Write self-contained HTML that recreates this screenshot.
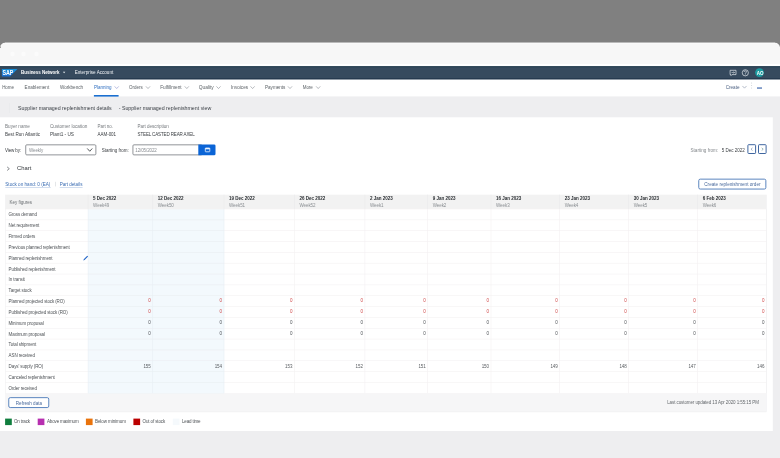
<!DOCTYPE html>
<html><head><meta charset="utf-8"><title>Supplier managed replenishment view</title>
<style>
html,body{margin:0;padding:0;overflow:hidden}
html{width:780px;height:458px}
#k{position:absolute;left:0;top:0;width:780px;height:458px;overflow:hidden}
body{width:780px;height:458px;background:#808080;overflow:hidden;position:relative;font-family:"Liberation Sans",sans-serif}
#w{position:absolute;left:-20px;top:-20px;width:820px;height:498px;background:#808080;filter:blur(0.45px)}
#c{position:absolute;left:20px;top:20px;width:780px;height:458px}
#s{position:absolute;left:-20px;top:-20px;display:block}
.t{position:absolute;white-space:nowrap;line-height:8px;height:8px;font-family:"Liberation Sans",sans-serif}
</style></head><body><div id="k"><div id="w"><div id="c">
<svg id="s" width="820" height="498" viewBox="-20 -20 820 498">
<rect x="-20.00" y="-20.00" width="820.00" height="62.70" fill="#808080"/>
<path d="M-20 120 V47.6 H0 A5 5 0 0 1 5 42.7 H775 A5 5 0 0 1 780 47.6 H800 V120 Z" fill="#f7f7f7" />
<path d="M5 43.1 H775" fill="none" stroke="#ffffff" stroke-width="0.7" />
<rect x="-20.00" y="42.60" width="20.00" height="5.20" fill="#808080"/>
<rect x="780.00" y="42.60" width="20.00" height="5.20" fill="#808080"/>
<rect x="0.00" y="46.70" width="0.70" height="0.90" fill="#303030"/>
<rect x="-20.00" y="96.30" width="820.00" height="400.00" fill="#eeeef0"/>
<rect x="-20.00" y="63.90" width="820.00" height="2.40" fill="#ffffff"/>
<rect x="-20.00" y="66.20" width="820.00" height="13.40" fill="#364a5e"/>
<rect x="-20.00" y="66.20" width="820.00" height="1.20" fill="#2a4254"/>
<rect x="-20.00" y="78.20" width="820.00" height="1.40" fill="#23374d"/>
<circle cx="12.5" cy="54" r="2.3" fill="#fbfbfb"/>
<circle cx="23.5" cy="54" r="2.3" fill="#fbfbfb"/>
<circle cx="36.5" cy="54" r="2.3" fill="#fbfbfb"/>
<rect x="-20.00" y="79.60" width="820.00" height="16.70" fill="#ffffff"/>
<rect x="-20.00" y="117.30" width="792.80" height="313.70" fill="#ffffff"/>
<defs><linearGradient id="g" x1="0" y1="0" x2="0" y2="1"><stop offset="0" stop-color="#1590d8"/><stop offset="1" stop-color="#1c6fd2"/></linearGradient></defs>
<g transform="translate(1.9 68.9) scale(0.1)"><path d="M0 0 H156 L82 75 H0 Z" fill="url(#g)"/><text x="5" y="62" font-family="Liberation Sans" font-weight="bold" font-size="66" fill="#fff" textLength="110" lengthAdjust="spacingAndGlyphs">SAP</text></g>
<path d="M62.9 71.7 h2.4 l-1.2 1.5 Z" fill="#e8edf2" />
<path d="M730.1 70.3 h5.9 v4.3 h-4.0 l-1.0 1.0 v-1.0 h-0.9 Z" fill="none" stroke="#e3e8ed" stroke-width="0.7" stroke-linejoin="round"/>
<path d="M731.5 72.5 h3 M733.5 71.5 l1 1 l-1 1" fill="none" stroke="#e3e8ed" stroke-width="0.55" />
<circle cx="745.3" cy="72.8" r="3.1" fill="none" stroke="#e3e8ed" stroke-width="0.7"/>
<path d="M744.1 72.0 q0 -1.2 1.2 -1.2 q1.2 0 1.2 1.1 q0 0.7 -1.2 1.2 v0.6" fill="none" stroke="#e3e8ed" stroke-width="0.65" />
<circle cx="745.3" cy="74.8" r="0.42" fill="#e3e8ed"/>
<circle cx="759.5" cy="72.6" r="4.4" fill="#1b9aa0"/>
<path d="M114.90 86.65 l1.80 1.90 l1.80 -1.90" fill="none" stroke="#7f86c8" stroke-width="0.55" stroke-linecap="round" stroke-linejoin="round"/>
<path d="M146.20 86.65 l1.80 1.90 l1.80 -1.90" fill="none" stroke="#7b8188" stroke-width="0.55" stroke-linecap="round" stroke-linejoin="round"/>
<path d="M185.00 86.65 l1.80 1.90 l1.80 -1.90" fill="none" stroke="#7b8188" stroke-width="0.55" stroke-linecap="round" stroke-linejoin="round"/>
<path d="M216.70 86.65 l1.80 1.90 l1.80 -1.90" fill="none" stroke="#7b8188" stroke-width="0.55" stroke-linecap="round" stroke-linejoin="round"/>
<path d="M250.80 86.65 l1.80 1.90 l1.80 -1.90" fill="none" stroke="#7b8188" stroke-width="0.55" stroke-linecap="round" stroke-linejoin="round"/>
<path d="M288.20 86.65 l1.80 1.90 l1.80 -1.90" fill="none" stroke="#7b8188" stroke-width="0.55" stroke-linecap="round" stroke-linejoin="round"/>
<path d="M316.40 86.65 l1.80 1.90 l1.80 -1.90" fill="none" stroke="#7b8188" stroke-width="0.55" stroke-linecap="round" stroke-linejoin="round"/>
<rect x="93.90" y="95.00" width="24.70" height="1.60" fill="#1a6fd0"/>
<path d="M742.70 86.25 l1.80 1.90 l1.80 -1.90" fill="none" stroke="#7b88a0" stroke-width="0.55" stroke-linecap="round" stroke-linejoin="round"/>
<circle cx="751.7" cy="83.0" r="0.45" fill="#a9b1bb"/>
<circle cx="751.7" cy="85.5" r="0.45" fill="#a9b1bb"/>
<circle cx="751.7" cy="88.0" r="0.45" fill="#a9b1bb"/>
<rect x="757.00" y="87.40" width="5.00" height="1.30" fill="#4f74b3"/>
<rect x="9.00" y="103.00" width="0.50" height="10.00" fill="#e7e8eb"/>
<rect x="25.73" y="144.83" width="70.15" height="10.05" fill="#fff" rx="1.0" stroke="#7e8287" stroke-width="0.85"/>
<path d="M87.50 148.75 l2.25 2.50 l2.25 -2.50" fill="none" stroke="#3a3e42" stroke-width="0.85" stroke-linecap="round" stroke-linejoin="round"/>
<rect x="132.93" y="144.83" width="69.15" height="10.05" fill="#fff" rx="1.0" stroke="#7e8287" stroke-width="0.85"/>
<path d="M198.3 144.4 H214.1 a1.4 1.4 0 0 1 1.4 1.4 V153.9 a1.4 1.4 0 0 1 -1.4 1.4 H198.3 Z" fill="#0a64d6" />
<rect x="205.30" y="148.00" width="4.50" height="3.80" fill="none" rx="0.5" stroke="#eaf3ff" stroke-width="0.8"/>
<rect x="205.30" y="148.00" width="4.50" height="1.30" fill="#eaf3ff"/>
<rect x="747.90" y="144.70" width="7.70" height="8.80" fill="#fff" rx="0.7" stroke="#3f66a0" stroke-width="1.0"/>
<rect x="758.50" y="144.70" width="7.60" height="8.80" fill="#fff" rx="0.7" stroke="#3f66a0" stroke-width="1.0"/>
<path d="M752.5 147.9 l-1.5 1.3 l1.5 1.3" fill="none" stroke="#7d93b3" stroke-width="0.7" />
<path d="M761.7 147.9 l1.5 1.3 l-1.5 1.3" fill="none" stroke="#6f9a9a" stroke-width="0.7" />
<path d="M7.1 166.9 l2.2 1.8 l-2.2 1.8" fill="none" stroke="#4a4f55" stroke-width="0.65" />
<rect x="5.30" y="187.30" width="45.40" height="0.50" fill="#a2badf"/>
<rect x="55.40" y="181.80" width="0.50" height="4.60" fill="#c9ccd0"/>
<rect x="59.70" y="187.30" width="22.90" height="0.50" fill="#a2badf"/>
<rect x="698.75" y="179.15" width="67.10" height="9.90" fill="#fff" rx="1.5" stroke="#4a78b8" stroke-width="0.9"/>
<rect x="5.40" y="194.70" width="761.00" height="14.30" fill="#f2f2f2"/>
<rect x="88.10" y="209.00" width="135.90" height="184.28" fill="#f3f9fd"/>
<rect x="5.40" y="208.70" width="761.00" height="0.60" fill="#f3f1f2"/>
<rect x="5.40" y="219.54" width="761.00" height="0.60" fill="#f3f1f2"/>
<rect x="5.40" y="230.38" width="761.00" height="0.60" fill="#f3f1f2"/>
<rect x="5.40" y="241.22" width="761.00" height="0.60" fill="#f3f1f2"/>
<rect x="5.40" y="252.06" width="761.00" height="0.60" fill="#f3f1f2"/>
<rect x="5.40" y="262.90" width="761.00" height="0.60" fill="#f3f1f2"/>
<rect x="5.40" y="273.74" width="761.00" height="0.60" fill="#f3f1f2"/>
<rect x="5.40" y="284.58" width="761.00" height="0.60" fill="#f3f1f2"/>
<rect x="5.40" y="295.42" width="761.00" height="0.60" fill="#f3f1f2"/>
<rect x="5.40" y="306.26" width="761.00" height="0.60" fill="#f3f1f2"/>
<rect x="5.40" y="317.10" width="761.00" height="0.60" fill="#f3f1f2"/>
<rect x="5.40" y="327.94" width="761.00" height="0.60" fill="#f3f1f2"/>
<rect x="5.40" y="338.78" width="761.00" height="0.60" fill="#f3f1f2"/>
<rect x="5.40" y="349.62" width="761.00" height="0.60" fill="#f3f1f2"/>
<rect x="5.40" y="360.46" width="761.00" height="0.60" fill="#f3f1f2"/>
<rect x="5.40" y="371.30" width="761.00" height="0.60" fill="#f3f1f2"/>
<rect x="5.40" y="382.14" width="761.00" height="0.60" fill="#f3f1f2"/>
<rect x="5.40" y="392.98" width="761.00" height="0.60" fill="#f3f1f2"/>
<rect x="88.10" y="219.54" width="135.90" height="0.60" fill="#eaf1f7"/>
<rect x="88.10" y="230.38" width="135.90" height="0.60" fill="#eaf1f7"/>
<rect x="88.10" y="241.22" width="135.90" height="0.60" fill="#eaf1f7"/>
<rect x="88.10" y="252.06" width="135.90" height="0.60" fill="#eaf1f7"/>
<rect x="88.10" y="262.90" width="135.90" height="0.60" fill="#eaf1f7"/>
<rect x="88.10" y="273.74" width="135.90" height="0.60" fill="#eaf1f7"/>
<rect x="88.10" y="284.58" width="135.90" height="0.60" fill="#eaf1f7"/>
<rect x="88.10" y="295.42" width="135.90" height="0.60" fill="#eaf1f7"/>
<rect x="88.10" y="306.26" width="135.90" height="0.60" fill="#eaf1f7"/>
<rect x="88.10" y="317.10" width="135.90" height="0.60" fill="#eaf1f7"/>
<rect x="88.10" y="327.94" width="135.90" height="0.60" fill="#eaf1f7"/>
<rect x="88.10" y="338.78" width="135.90" height="0.60" fill="#eaf1f7"/>
<rect x="88.10" y="349.62" width="135.90" height="0.60" fill="#eaf1f7"/>
<rect x="88.10" y="360.46" width="135.90" height="0.60" fill="#eaf1f7"/>
<rect x="88.10" y="371.30" width="135.90" height="0.60" fill="#eaf1f7"/>
<rect x="88.10" y="382.14" width="135.90" height="0.60" fill="#eaf1f7"/>
<rect x="88.10" y="392.98" width="135.90" height="0.60" fill="#eaf1f7"/>
<rect x="87.80" y="209.00" width="0.60" height="184.28" fill="#e8eff5"/>
<rect x="152.45" y="209.00" width="0.60" height="184.28" fill="#e8eff5"/>
<rect x="223.70" y="209.00" width="0.60" height="184.28" fill="#e8eff5"/>
<rect x="294.10" y="209.00" width="0.60" height="184.28" fill="#f3f1f2"/>
<rect x="364.60" y="209.00" width="0.60" height="184.28" fill="#f3f1f2"/>
<rect x="427.40" y="209.00" width="0.60" height="184.28" fill="#f3f1f2"/>
<rect x="490.70" y="209.00" width="0.60" height="184.28" fill="#f3f1f2"/>
<rect x="559.40" y="209.00" width="0.60" height="184.28" fill="#f3f1f2"/>
<rect x="628.40" y="209.00" width="0.60" height="184.28" fill="#f3f1f2"/>
<rect x="697.40" y="209.00" width="0.60" height="184.28" fill="#f3f1f2"/>
<rect x="766.10" y="209.00" width="0.60" height="184.28" fill="#f3f1f2"/>
<rect x="87.80" y="194.70" width="0.60" height="14.30" fill="#eaeaeb"/>
<rect x="152.45" y="194.70" width="0.60" height="14.30" fill="#eaeaeb"/>
<rect x="223.70" y="194.70" width="0.60" height="14.30" fill="#eaeaeb"/>
<rect x="294.10" y="194.70" width="0.60" height="14.30" fill="#eaeaeb"/>
<rect x="364.60" y="194.70" width="0.60" height="14.30" fill="#eaeaeb"/>
<rect x="427.40" y="194.70" width="0.60" height="14.30" fill="#eaeaeb"/>
<rect x="490.70" y="194.70" width="0.60" height="14.30" fill="#eaeaeb"/>
<rect x="559.40" y="194.70" width="0.60" height="14.30" fill="#eaeaeb"/>
<rect x="628.40" y="194.70" width="0.60" height="14.30" fill="#eaeaeb"/>
<rect x="697.40" y="194.70" width="0.60" height="14.30" fill="#eaeaeb"/>
<rect x="5.10" y="194.70" width="0.60" height="216.98" fill="#f0f0f1"/>
<rect x="766.10" y="194.70" width="0.60" height="216.98" fill="#f0f0f1"/>
<path d="M83.3 260.38 l0.45 -1.25 l3.5 -3.5 l0.8 0.8 l-3.5 3.5 Z" fill="#1f63c7" />
<rect x="5.40" y="393.58" width="761.00" height="18.10" fill="#f6f6f7"/>
<rect x="5.40" y="411.58" width="761.00" height="0.60" fill="#ededef"/>
<rect x="8.75" y="397.65" width="40.00" height="9.90" fill="#fff" rx="1.5" stroke="#4a78b8" stroke-width="0.9"/>
<rect x="5.10" y="418.60" width="6.70" height="6.50" fill="#107e3e"/>
<rect x="37.70" y="418.60" width="6.70" height="6.50" fill="#b72fb0"/>
<rect x="85.90" y="418.60" width="6.70" height="6.50" fill="#e9730c"/>
<rect x="133.40" y="418.60" width="6.70" height="6.50" fill="#bb0000"/>
<rect x="172.80" y="418.60" width="6.70" height="6.50" fill="#f5f9fc"/>
</svg>
<span class="t" style="left:21.10px;top:68.75px;font-size:4.50px;letter-spacing:-0.045px;color:#fff;font-weight:bold">Business Network</span>
<span class="t" style="left:74.70px;top:68.75px;font-size:4.60px;color:#f0f3f6;">Enterprise Account</span>
<span class="t" style="left:756.75px;top:69.75px;font-size:4.50px;letter-spacing:-0.400px;color:#fff;font-weight:bold;letter-spacing:-0.1px">AO</span>
<span class="t" style="left:2.20px;top:83.75px;font-size:4.50px;letter-spacing:-0.095px;color:#5b6166;">Home</span>
<span class="t" style="left:24.60px;top:83.75px;font-size:4.61px;color:#5b6166;">Enablement</span>
<span class="t" style="left:59.90px;top:83.75px;font-size:4.62px;color:#5b6166;">Workbench</span>
<span class="t" style="left:94.10px;top:83.75px;font-size:4.50px;color:#2f6fc0;">Planning</span>
<span class="t" style="left:129.00px;top:83.75px;font-size:4.50px;letter-spacing:-0.010px;color:#5b6166;">Orders</span>
<span class="t" style="left:160.20px;top:83.75px;font-size:4.72px;color:#5b6166;">Fulfillment</span>
<span class="t" style="left:198.70px;top:83.75px;font-size:4.85px;color:#5b6166;">Quality</span>
<span class="t" style="left:231.10px;top:83.75px;font-size:4.61px;color:#5b6166;">Invoices</span>
<span class="t" style="left:265.00px;top:83.75px;font-size:4.59px;color:#5b6166;">Payments</span>
<span class="t" style="left:302.70px;top:83.75px;font-size:4.50px;letter-spacing:-0.055px;color:#5b6166;">More</span>
<span class="t" style="left:725.80px;top:83.75px;font-size:4.56px;color:#4a5f80;">Create</span>
<span class="t" style="left:18.00px;top:103.75px;font-size:5.25px;color:#3d4248;">Supplier managed replenishment details</span>
<span class="t" style="left:118.70px;top:103.75px;font-size:5.27px;color:#3d4248;">- Supplier managed replenishment view</span>
<span class="t" style="left:5.00px;top:122.75px;font-size:4.64px;color:#767a7e;">Buyer name</span>
<span class="t" style="left:50.00px;top:122.75px;font-size:4.65px;color:#767a7e;">Customer location</span>
<span class="t" style="left:97.50px;top:122.75px;font-size:4.50px;letter-spacing:-0.035px;color:#767a7e;">Part no.</span>
<span class="t" style="left:137.50px;top:122.75px;font-size:4.53px;color:#767a7e;">Part description</span>
<span class="t" style="left:5.00px;top:130.75px;font-size:4.60px;color:#3a3e42;">Best Run Atlantic</span>
<span class="t" style="left:50.00px;top:130.75px;font-size:4.69px;color:#3a3e42;">Plant1 - US</span>
<span class="t" style="left:97.50px;top:130.75px;font-size:4.50px;letter-spacing:-0.030px;color:#3a3e42;">AAM-001</span>
<span class="t" style="left:137.50px;top:130.75px;font-size:4.50px;letter-spacing:-0.125px;color:#3a3e42;">STEEL CASTED REAR AXEL</span>
<span class="t" style="left:5.00px;top:146.75px;font-size:4.50px;letter-spacing:-0.125px;color:#3a3e42;">View by:</span>
<span class="t" style="left:29.00px;top:146.75px;font-size:4.50px;letter-spacing:-0.105px;color:#8a8e93;">Weekly</span>
<span class="t" style="left:101.70px;top:146.75px;font-size:4.50px;color:#3a3e42;">Starting from:</span>
<span class="t" style="left:135.30px;top:146.75px;font-size:4.50px;letter-spacing:-0.110px;color:#8a8e93;">12/05/2022</span>
<span class="t" style="left:690.50px;top:146.75px;font-size:4.63px;color:#85898d;">Starting from:</span>
<span class="t" style="left:721.70px;top:146.75px;font-size:4.50px;color:#3a3e42;">5 Dec 2022</span>
<span class="t" style="left:17.00px;top:163.75px;font-size:5.85px;color:#32363a;">Chart</span>
<span class="t" style="left:5.30px;top:180.75px;font-size:4.62px;color:#3b6db3;">Stock on hand: 0 (EA)</span>
<span class="t" style="left:59.70px;top:180.75px;font-size:4.56px;color:#3b6db3;">Part details</span>
<span class="t" style="left:704.25px;top:180.75px;font-size:4.64px;color:#4a6a9c;">Create replenishment order</span>
<span class="t" style="left:9.50px;top:198.75px;font-size:4.50px;color:#6a6e72;">Key figures</span>
<span class="t" style="left:93.10px;top:194.75px;font-size:4.51px;color:#2b2f33;font-weight:bold">5 Dec 2022</span>
<span class="t" style="left:93.10px;top:201.75px;font-size:4.50px;letter-spacing:-0.060px;color:#8b8f93;">Week49</span>
<span class="t" style="left:157.75px;top:194.75px;font-size:4.51px;color:#2b2f33;font-weight:bold">12 Dec 2022</span>
<span class="t" style="left:157.75px;top:201.75px;font-size:4.50px;letter-spacing:-0.060px;color:#8b8f93;">Week50</span>
<span class="t" style="left:229.00px;top:194.75px;font-size:4.51px;color:#2b2f33;font-weight:bold">19 Dec 2022</span>
<span class="t" style="left:229.00px;top:201.75px;font-size:4.50px;letter-spacing:-0.060px;color:#8b8f93;">Week51</span>
<span class="t" style="left:299.40px;top:194.75px;font-size:4.51px;color:#2b2f33;font-weight:bold">26 Dec 2022</span>
<span class="t" style="left:299.40px;top:201.75px;font-size:4.50px;letter-spacing:-0.060px;color:#8b8f93;">Week52</span>
<span class="t" style="left:369.90px;top:194.75px;font-size:4.51px;color:#2b2f33;font-weight:bold">2 Jan 2023</span>
<span class="t" style="left:369.90px;top:201.75px;font-size:4.50px;letter-spacing:-0.060px;color:#8b8f93;">Week1</span>
<span class="t" style="left:432.70px;top:194.75px;font-size:4.51px;color:#2b2f33;font-weight:bold">9 Jan 2023</span>
<span class="t" style="left:432.70px;top:201.75px;font-size:4.50px;letter-spacing:-0.060px;color:#8b8f93;">Week2</span>
<span class="t" style="left:496.00px;top:194.75px;font-size:4.51px;color:#2b2f33;font-weight:bold">16 Jan 2023</span>
<span class="t" style="left:496.00px;top:201.75px;font-size:4.50px;letter-spacing:-0.060px;color:#8b8f93;">Week3</span>
<span class="t" style="left:564.70px;top:194.75px;font-size:4.51px;color:#2b2f33;font-weight:bold">23 Jan 2023</span>
<span class="t" style="left:564.70px;top:201.75px;font-size:4.50px;letter-spacing:-0.060px;color:#8b8f93;">Week4</span>
<span class="t" style="left:633.70px;top:194.75px;font-size:4.51px;color:#2b2f33;font-weight:bold">30 Jan 2023</span>
<span class="t" style="left:633.70px;top:201.75px;font-size:4.50px;letter-spacing:-0.060px;color:#8b8f93;">Week5</span>
<span class="t" style="left:702.70px;top:194.75px;font-size:4.51px;color:#2b2f33;font-weight:bold">6 Feb 2023</span>
<span class="t" style="left:702.70px;top:201.75px;font-size:4.50px;letter-spacing:-0.060px;color:#8b8f93;">Week6</span>
<span class="t" style="left:8.60px;top:210.75px;font-size:4.50px;letter-spacing:-0.110px;color:#4f5357;">Gross demand</span>
<span class="t" style="left:8.60px;top:221.75px;font-size:4.50px;letter-spacing:-0.110px;color:#4f5357;">Net requirement</span>
<span class="t" style="left:8.60px;top:232.75px;font-size:4.50px;letter-spacing:-0.110px;color:#4f5357;">Firmed orders</span>
<span class="t" style="left:8.60px;top:243.75px;font-size:4.50px;letter-spacing:-0.110px;color:#4f5357;">Previous planned replenishment</span>
<span class="t" style="left:8.60px;top:254.75px;font-size:4.50px;letter-spacing:-0.110px;color:#4f5357;">Planned replenishment</span>
<span class="t" style="left:8.60px;top:265.75px;font-size:4.50px;letter-spacing:-0.110px;color:#4f5357;">Published replenishment</span>
<span class="t" style="left:8.60px;top:275.75px;font-size:4.50px;letter-spacing:-0.110px;color:#4f5357;">In transit</span>
<span class="t" style="left:8.60px;top:286.75px;font-size:4.50px;letter-spacing:-0.110px;color:#4f5357;">Target stock</span>
<span class="t" style="left:8.60px;top:297.75px;font-size:4.50px;letter-spacing:-0.110px;color:#4f5357;">Planned projected stock (RO)</span>
<span class="t" style="left:8.60px;top:308.75px;font-size:4.50px;letter-spacing:-0.110px;color:#4f5357;">Published projected stock (RO)</span>
<span class="t" style="left:8.60px;top:319.75px;font-size:4.50px;letter-spacing:-0.110px;color:#4f5357;">Minimum proposal</span>
<span class="t" style="left:8.60px;top:330.75px;font-size:4.50px;letter-spacing:-0.110px;color:#4f5357;">Maximum proposal</span>
<span class="t" style="left:8.60px;top:340.75px;font-size:4.50px;letter-spacing:-0.110px;color:#4f5357;">Total shipment</span>
<span class="t" style="left:8.60px;top:351.75px;font-size:4.50px;letter-spacing:-0.110px;color:#4f5357;">ASN received</span>
<span class="t" style="left:8.60px;top:362.75px;font-size:4.50px;letter-spacing:-0.110px;color:#4f5357;">Days' supply (RO)</span>
<span class="t" style="left:8.60px;top:373.75px;font-size:4.50px;letter-spacing:-0.110px;color:#4f5357;">Canceled replenishment</span>
<span class="t" style="left:8.60px;top:384.75px;font-size:4.50px;letter-spacing:-0.110px;color:#4f5357;">Order received</span>
<span class="t" style="right:629.35px;top:296.75px;font-size:4.50px;letter-spacing:-0.100px;color:#d04a4a;">0</span>
<span class="t" style="right:558.10px;top:296.75px;font-size:4.50px;letter-spacing:-0.100px;color:#d04a4a;">0</span>
<span class="t" style="right:487.70px;top:296.75px;font-size:4.50px;letter-spacing:-0.100px;color:#d04a4a;">0</span>
<span class="t" style="right:417.20px;top:296.75px;font-size:4.50px;letter-spacing:-0.100px;color:#d04a4a;">0</span>
<span class="t" style="right:354.40px;top:296.75px;font-size:4.50px;letter-spacing:-0.100px;color:#d04a4a;">0</span>
<span class="t" style="right:291.10px;top:296.75px;font-size:4.50px;letter-spacing:-0.100px;color:#d04a4a;">0</span>
<span class="t" style="right:222.40px;top:296.75px;font-size:4.50px;letter-spacing:-0.100px;color:#d04a4a;">0</span>
<span class="t" style="right:153.40px;top:296.75px;font-size:4.50px;letter-spacing:-0.100px;color:#d04a4a;">0</span>
<span class="t" style="right:84.40px;top:296.75px;font-size:4.50px;letter-spacing:-0.100px;color:#d04a4a;">0</span>
<span class="t" style="right:15.70px;top:296.75px;font-size:4.50px;letter-spacing:-0.100px;color:#d04a4a;">0</span>
<span class="t" style="right:629.35px;top:307.75px;font-size:4.50px;letter-spacing:-0.100px;color:#d04a4a;">0</span>
<span class="t" style="right:558.10px;top:307.75px;font-size:4.50px;letter-spacing:-0.100px;color:#d04a4a;">0</span>
<span class="t" style="right:487.70px;top:307.75px;font-size:4.50px;letter-spacing:-0.100px;color:#d04a4a;">0</span>
<span class="t" style="right:417.20px;top:307.75px;font-size:4.50px;letter-spacing:-0.100px;color:#d04a4a;">0</span>
<span class="t" style="right:354.40px;top:307.75px;font-size:4.50px;letter-spacing:-0.100px;color:#d04a4a;">0</span>
<span class="t" style="right:291.10px;top:307.75px;font-size:4.50px;letter-spacing:-0.100px;color:#d04a4a;">0</span>
<span class="t" style="right:222.40px;top:307.75px;font-size:4.50px;letter-spacing:-0.100px;color:#d04a4a;">0</span>
<span class="t" style="right:153.40px;top:307.75px;font-size:4.50px;letter-spacing:-0.100px;color:#d04a4a;">0</span>
<span class="t" style="right:84.40px;top:307.75px;font-size:4.50px;letter-spacing:-0.100px;color:#d04a4a;">0</span>
<span class="t" style="right:15.70px;top:307.75px;font-size:4.50px;letter-spacing:-0.100px;color:#d04a4a;">0</span>
<span class="t" style="right:629.35px;top:318.75px;font-size:4.50px;letter-spacing:-0.100px;color:#4f5357;">0</span>
<span class="t" style="right:558.10px;top:318.75px;font-size:4.50px;letter-spacing:-0.100px;color:#4f5357;">0</span>
<span class="t" style="right:487.70px;top:318.75px;font-size:4.50px;letter-spacing:-0.100px;color:#4f5357;">0</span>
<span class="t" style="right:417.20px;top:318.75px;font-size:4.50px;letter-spacing:-0.100px;color:#4f5357;">0</span>
<span class="t" style="right:354.40px;top:318.75px;font-size:4.50px;letter-spacing:-0.100px;color:#4f5357;">0</span>
<span class="t" style="right:291.10px;top:318.75px;font-size:4.50px;letter-spacing:-0.100px;color:#4f5357;">0</span>
<span class="t" style="right:222.40px;top:318.75px;font-size:4.50px;letter-spacing:-0.100px;color:#4f5357;">0</span>
<span class="t" style="right:153.40px;top:318.75px;font-size:4.50px;letter-spacing:-0.100px;color:#4f5357;">0</span>
<span class="t" style="right:84.40px;top:318.75px;font-size:4.50px;letter-spacing:-0.100px;color:#4f5357;">0</span>
<span class="t" style="right:15.70px;top:318.75px;font-size:4.50px;letter-spacing:-0.100px;color:#4f5357;">0</span>
<span class="t" style="right:629.35px;top:329.75px;font-size:4.50px;letter-spacing:-0.100px;color:#4f5357;">0</span>
<span class="t" style="right:558.10px;top:329.75px;font-size:4.50px;letter-spacing:-0.100px;color:#4f5357;">0</span>
<span class="t" style="right:487.70px;top:329.75px;font-size:4.50px;letter-spacing:-0.100px;color:#4f5357;">0</span>
<span class="t" style="right:417.20px;top:329.75px;font-size:4.50px;letter-spacing:-0.100px;color:#4f5357;">0</span>
<span class="t" style="right:354.40px;top:329.75px;font-size:4.50px;letter-spacing:-0.100px;color:#4f5357;">0</span>
<span class="t" style="right:291.10px;top:329.75px;font-size:4.50px;letter-spacing:-0.100px;color:#4f5357;">0</span>
<span class="t" style="right:222.40px;top:329.75px;font-size:4.50px;letter-spacing:-0.100px;color:#4f5357;">0</span>
<span class="t" style="right:153.40px;top:329.75px;font-size:4.50px;letter-spacing:-0.100px;color:#4f5357;">0</span>
<span class="t" style="right:84.40px;top:329.75px;font-size:4.50px;letter-spacing:-0.100px;color:#4f5357;">0</span>
<span class="t" style="right:15.70px;top:329.75px;font-size:4.50px;letter-spacing:-0.100px;color:#4f5357;">0</span>
<span class="t" style="right:629.35px;top:362.75px;font-size:4.50px;letter-spacing:-0.100px;color:#5a5e62;">155</span>
<span class="t" style="right:558.10px;top:362.75px;font-size:4.50px;letter-spacing:-0.100px;color:#5a5e62;">154</span>
<span class="t" style="right:487.70px;top:362.75px;font-size:4.50px;letter-spacing:-0.100px;color:#5a5e62;">153</span>
<span class="t" style="right:417.20px;top:362.75px;font-size:4.50px;letter-spacing:-0.100px;color:#5a5e62;">152</span>
<span class="t" style="right:354.40px;top:362.75px;font-size:4.50px;letter-spacing:-0.100px;color:#5a5e62;">151</span>
<span class="t" style="right:291.10px;top:362.75px;font-size:4.50px;letter-spacing:-0.100px;color:#5a5e62;">150</span>
<span class="t" style="right:222.40px;top:362.75px;font-size:4.50px;letter-spacing:-0.100px;color:#5a5e62;">149</span>
<span class="t" style="right:153.40px;top:362.75px;font-size:4.50px;letter-spacing:-0.100px;color:#5a5e62;">148</span>
<span class="t" style="right:84.40px;top:362.75px;font-size:4.50px;letter-spacing:-0.100px;color:#5a5e62;">147</span>
<span class="t" style="right:15.70px;top:362.75px;font-size:4.50px;letter-spacing:-0.100px;color:#5a5e62;">146</span>
<span class="t" style="left:15.80px;top:399.75px;font-size:4.58px;color:#4a6a9c;">Refresh data</span>
<span class="t" style="left:667.20px;top:398.75px;font-size:4.50px;letter-spacing:-0.090px;color:#666a6e;">Last customer updated 13 Apr 2020 1:55:15 PM</span>
<span class="t" style="left:14.00px;top:417.75px;font-size:4.50px;letter-spacing:-0.135px;color:#4f5357;">On track</span>
<span class="t" style="left:47.00px;top:417.75px;font-size:4.50px;letter-spacing:-0.150px;color:#4f5357;">Above maximum</span>
<span class="t" style="left:95.00px;top:417.75px;font-size:4.50px;letter-spacing:-0.070px;color:#4f5357;">Below minimum</span>
<span class="t" style="left:142.50px;top:417.75px;font-size:4.50px;letter-spacing:-0.125px;color:#4f5357;">Out of stock</span>
<span class="t" style="left:182.00px;top:417.75px;font-size:4.50px;letter-spacing:-0.145px;color:#4f5357;">Lead time</span>
</div></div></div></body></html>
